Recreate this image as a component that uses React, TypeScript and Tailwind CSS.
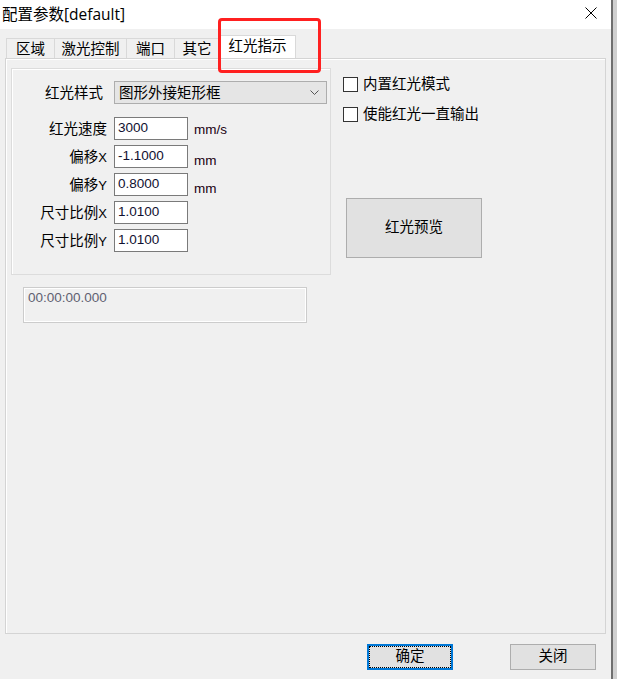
import React from 'react';

const tabs = [
  { label: '区域', w: 'w-[48px]' },
  { label: '激光控制', w: 'w-[72px]' },
  { label: '端口', w: 'w-[48px]' },
  { label: '其它', w: 'w-[45px]' },
];

const rows = [
  { label: '红光速度', axis: '', value: '3000', unit: 'mm/s', unitTop: 'mt-[5px]' },
  { label: '偏移', axis: 'X', value: '-1.1000', unit: 'mm', unitTop: 'mt-[8px]' },
  { label: '偏移', axis: 'Y', value: '0.8000', unit: 'mm', unitTop: 'mt-[8px]' },
  { label: '尺寸比例', axis: 'X', value: '1.0100', unit: '', unitTop: '' },
  { label: '尺寸比例', axis: 'Y', value: '1.0100', unit: '', unitTop: '' },
];

const Checkbox = ({ label }: { label: string }) => (
  <div className="flex items-center h-[15px]">
    <span className="w-[15px] h-[15px] border border-[#333333] bg-white"></span>
    <span className="ml-[5px] text-[14.5px] leading-[15px] text-black">{label}</span>
  </div>
);

export default function App() {
  return (
    <div className="w-[617px] h-[679px] flex bg-[#f0f0f0] text-black font-['Liberation_Sans','Noto_Sans_CJK_SC',sans-serif] overflow-hidden">
      <div className="w-[611px] h-full flex flex-col relative">
        {/* 标题栏 */}
        <div className="h-[29px] bg-white flex items-center justify-between pl-[2px] pr-[14px]">
          <span className="text-[15.5px] leading-[20px] font-['Open_Sans','Noto_Sans_CJK_SC',sans-serif] -mt-[2px]">配置参数[default]</span>
          <svg width="12" height="12" viewBox="0 0 12 12" className="-mt-[3px]">
            <path d="M0.5 0.5 L11.5 11.5 M11.5 0.5 L0.5 11.5" stroke="#000" strokeWidth="1" fill="none" />
          </svg>
        </div>

        <div className="flex-1 flex flex-col pl-[5px]">
          {/* 标签页 */}
          <div className="mt-[6px] h-[23px] ml-[1px] flex items-end">
            {tabs.map((t) => (
              <div
                key={t.label}
                className={`${t.w} h-[20px] border-t border-l border-[#d9d9d9] flex items-center justify-center text-[14.5px] leading-[18px]`}
              >
                {t.label}
              </div>
            ))}
            <div className="w-[77px] h-[23px] bg-white border-t border-x border-[#d9d9d9] flex items-center justify-center text-[14.5px] leading-[18px] pb-[2px]">
              红光指示
            </div>
          </div>

          {/* 页面 */}
          <div className="w-[601px] h-[576px] border border-[#d4d4d4] shadow-[inset_1px_1px_0_#ffffff] pl-[5px] pt-[9px]">
            <div className="flex items-start">
              {/* 分组框 */}
              <div className="w-[320px] h-[207px] border border-[#dcdcdc] shadow-[inset_1px_1px_0_#ffffff]">
                <div className="mt-[12px] flex items-center">
                  <div className="w-[91px] text-right text-[14.5px] leading-[18px]">红光样式</div>
                  <div className="ml-[11px] w-[213px] h-[23px] bg-[#e5e5e5] border border-[#adadad] flex items-center justify-between pl-[4px] pr-[7px]">
                    <span className="text-[14.5px] leading-[18px]">图形外接矩形框</span>
                    <svg width="9" height="5" viewBox="0 0 9 5">
                      <path d="M0.5 0.5 L4.5 4.5 L8.5 0.5" stroke="#555" strokeWidth="1" fill="none" />
                    </svg>
                  </div>
                </div>
                <div className="mt-[13px] flex flex-col gap-[5px]">
                  {rows.map((r, i) => (
                    <div key={i} className="flex items-start h-[23px]">
                      <div className="w-[95px] h-[23px] flex items-center justify-end text-[14.5px] leading-[18px]">
                        {r.label}
                        {r.axis && <span className="text-[13px] leading-[16px] mt-[3px]">{r.axis}</span>}
                      </div>
                      <div className="ml-[7px] w-[74px] h-[23px] bg-white border border-[#7a7a7a] flex items-center pl-[3px] text-[13.5px] text-[#101030]">
                        {r.value}
                      </div>
                      {r.unit && (
                        <span className={`ml-[6px] text-[13.5px] leading-[15px] text-[#200010] ${r.unitTop}`}>{r.unit}</span>
                      )}
                    </div>
                  ))}
                </div>
              </div>

              {/* 右侧 */}
              <div className="ml-[12px] mt-[9px] flex flex-col">
                <Checkbox label="内置红光模式" />
                <div className="mt-[15px]">
                  <Checkbox label="使能红光一直输出" />
                </div>
                <div className="mt-[76px] ml-[3px] w-[136px] h-[60px] bg-[#e1e1e1] border border-[#adadad] flex items-center justify-center text-[14.5px]">
                  红光预览
                </div>
              </div>
            </div>

            {/* 计时 */}
            <div className="mt-[12px] ml-[12px] w-[284px] h-[36px] border border-[#cccccc] shadow-[inset_1px_1px_0_#ffffff,inset_-1px_-1px_0_#ffffff] px-[4px] pt-[1px] leading-[16px]">
              <span className="text-[13.5px] leading-[16px] text-[#606070]">00:00:00.000</span>
            </div>
          </div>

          {/* 底部按钮 */}
          <div className="mt-[10px] flex justify-end pr-[15px] gap-[57px]">
            <div className="w-[86px] h-[26px] bg-[#e1e1e1] border-2 border-[#0078d7] outline outline-1 outline-dotted outline-black outline-offset-[-3px] flex items-center justify-center text-[14.5px]">
              确定
            </div>
            <div className="w-[86px] h-[26px] bg-[#e1e1e1] border border-[#adadad] flex items-center justify-center text-[14.5px]">
              关闭
            </div>
          </div>
        </div>

        {/* 标注框 */}
        <div className="absolute left-[218px] top-[18px] w-[103px] h-[55px] border-[3px] border-[#ff2020] rounded-[4px]"></div>
      </div>
      <div className="w-[2px] h-full bg-[#6f6f6f]"></div>
      <div className="w-[4px] h-full bg-[#d0d0d0]"></div>
    </div>
  );
}
